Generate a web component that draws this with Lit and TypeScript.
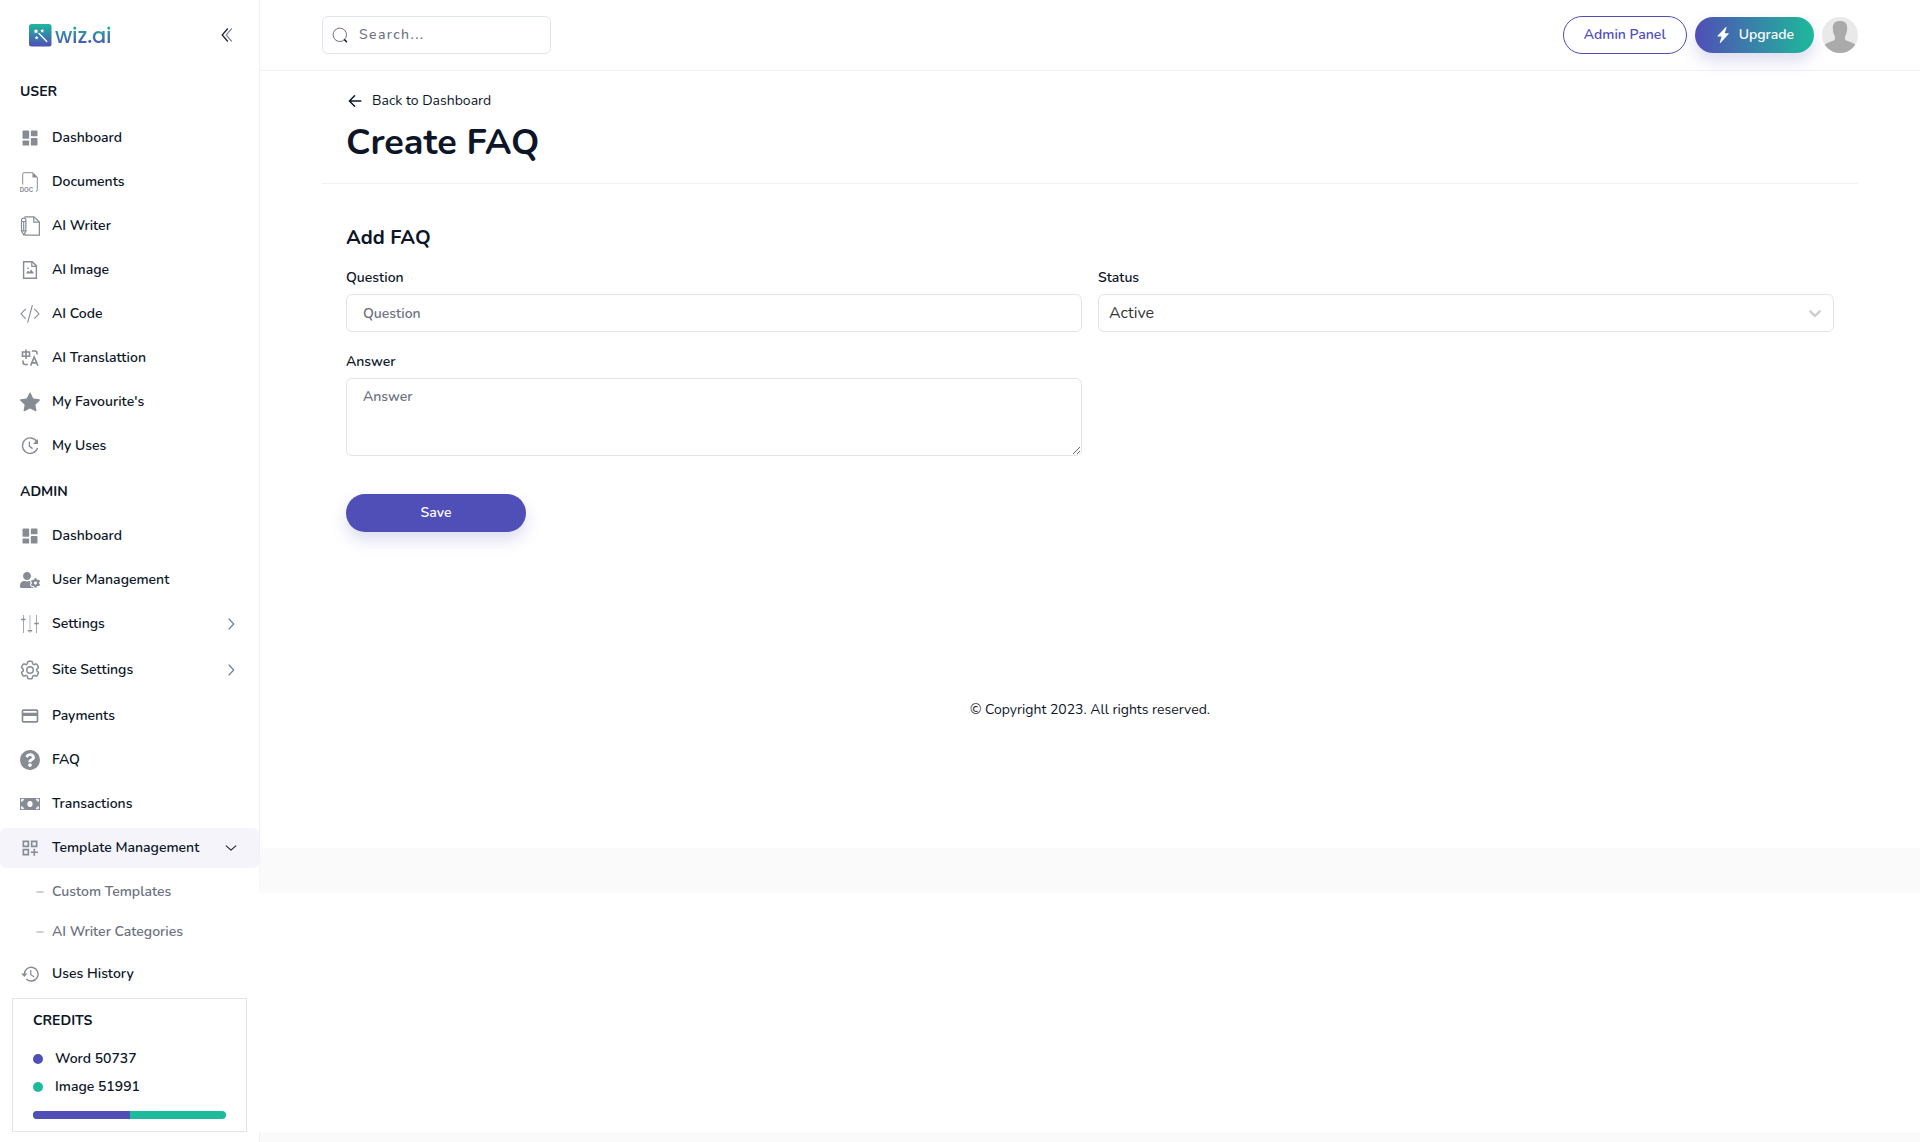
import { LitElement, html, svg, css, nothing, type TemplateResult, type SVGTemplateResult } from "lit";
import { customElement } from "lit/decorators.js";

const icon = (box: string, body: SVGTemplateResult) =>
  html`<svg class="icon" viewBox=${box} aria-hidden="true">${body}</svg>`;

const icons: Record<string, TemplateResult> = {
  dashboard: icon("0 0 24 24", svg`<path fill="currentColor" d="M4 13h6a1 1 0 0 0 1-1V4a1 1 0 0 0-1-1H4a1 1 0 0 0-1 1v8a1 1 0 0 0 1 1zm-1 7a1 1 0 0 0 1 1h6a1 1 0 0 0 1-1v-4a1 1 0 0 0-1-1H4a1 1 0 0 0-1 1v4zm10 0a1 1 0 0 0 1 1h6a1 1 0 0 0 1-1v-7a1 1 0 0 0-1-1h-6a1 1 0 0 0-1 1v7zm1-10h6a1 1 0 0 0 1-1V4a1 1 0 0 0-1-1h-6a1 1 0 0 0-1 1v5a1 1 0 0 0 1 1z"/>`),
  documents: icon("0 0 20 20", svg`
    <path fill="none" stroke="currentColor" d="M2.7 12.5V2.2Q2.7.7 4.2.7H13l4.3 4.5v12.6q0 1.4-1.5 1.7"/>
    <path fill="currentColor" d="M12.5.7v4.800h4.800z"/>
    <text x="-.3" y="19.6" font-size="6.3" font-weight="700" textLength="13.5" lengthAdjust="spacingAndGlyphs" fill="currentColor" font-family="Liberation Sans, sans-serif">DOC</text>`),
  writer: icon("0 0 20 20", svg`
    <g fill="none" stroke="currentColor" stroke-width="1.2">
      <path d="M5 1.800V.8h9l5.400 5.200v13.200H5v-1.400"/>
      <path d="M13.800 1v5.200h5.400"/>
      <path d="M1.500 4q0-1.900 2.200-1.900T5.900 4v11l-2.200 3.800L1.500 15z"/>
      <path d="M1.500 5.500h4.400M3.700 6v8.500M1.500 14.800h4.400"/>
    </g>`),
  image: icon("0 0 20 20", svg`
    <path fill="none" stroke="currentColor" stroke-width="1.4" d="M3.600 1.700h8.600l4.200 4.200v12.400H3.600z"/>
    <path fill="none" stroke="currentColor" stroke-width="1.2" d="M11.800 2v4.300h4.400"/>
    <path fill="currentColor" d="M6 13.500l2-3 1.400 1.600 1.900-2.600 2.700 4zM7.300 7.500h1.500v1.400H7.300z"/>`),
  code: icon("0 0 20 20", svg`<path fill="none" stroke="currentColor" stroke-width="1.1" stroke-linecap="round" stroke-linejoin="round" d="M5.400 5.200L1 9.800l4.400 4.600M14.600 5.200L19 9.800l-4.400 4.600M12.300 1.500L7.700 18.300"/>`),
  translate: icon("0 0 20 20", svg`
    <g fill="none" stroke="currentColor" stroke-width="1.6">
      <path d="M2.500 4h7v4.200h-7zM6 1.600v9.400"/>
      <path d="M11.800 3H15q2 0 2 2v1.500M3 12.500v1.800q0 2.200 2.200 2.200h2.600"/>
      <path d="M10.600 17.600L14.200 9l3.700 8.600M11.800 14.900h4.900"/>
    </g>`),
  star: icon("0 0 16 16", svg`<path fill="currentColor" d="M3.612 15.443c-.386.198-.824-.149-.746-.592l.83-4.730L.173 6.765c-.329-.314-.158-.888.283-.95l4.898-.696L7.538.792c.197-.39.73-.39.927 0l2.184 4.327 4.898.696c.441.062.612.636.282.95l-3.522 3.356.83 4.730c.078.443-.36.79-.746.592L8 13.187l-4.389 2.256z"/>`),
  uses: icon("0 0 20 20", svg`
    <path fill="none" stroke="currentColor" stroke-width="1.3" d="M16.700 5.600A7.700 7.700 0 1 0 17.500 12"/>
    <path fill="none" stroke="currentColor" stroke-width="1.3" d="M9.400 5.500v4.900l3.200 2.200"/>
    <path fill="currentColor" d="M18 3v5h-5z"/>`),
  users: icon("0 0 640 512", svg`<path fill="currentColor" d="M610.5 373.3c2.6-14.1 2.6-28.5 0-42.6l25.8-14.9c3-1.7 4.3-5.2 3.3-8.5-6.7-21.6-18.2-41.2-33.2-57.4-2.3-2.5-6-3.1-9-1.4l-25.8 14.9c-10.9-9.3-23.4-16.5-36.9-21.3v-29.8c0-3.4-2.4-6.4-5.7-7.1-22.3-5-45-4.8-66.2 0-3.3.7-5.7 3.7-5.7 7.1v29.8c-13.5 4.8-26 12-36.9 21.3l-25.8-14.9c-2.9-1.7-6.7-1.1-9 1.4-15 16.2-26.5 35.8-33.2 57.4-1 3.3.4 6.8 3.3 8.5l25.8 14.9c-2.6 14.1-2.6 28.5 0 42.6l-25.8 14.9c-3 1.7-4.3 5.2-3.3 8.5 6.7 21.6 18.2 41.1 33.2 57.4 2.3 2.5 6 3.1 9 1.4l25.8-14.9c10.9 9.3 23.4 16.5 36.9 21.3v29.8c0 3.4 2.4 6.4 5.7 7.1 22.3 5 45 4.8 66.2 0 3.3-.7 5.7-3.7 5.7-7.1v-29.8c13.5-4.8 26-12 36.9-21.3l25.8 14.9c2.9 1.7 6.7 1.1 9-1.4 15-16.2 26.5-35.8 33.2-57.4 1-3.3-.4-6.8-3.3-8.5l-25.8-14.9zM496 400.5c-26.8 0-48.5-21.8-48.5-48.5s21.8-48.5 48.5-48.5 48.5 21.8 48.5 48.5-21.7 48.5-48.5 48.5zM224 256c70.7 0 128-57.3 128-128S294.700 0 224 0 96 57.300 96 128s57.300 128 128 128zm201.200 226.500c-2.300-1.200-4.600-2.600-6.800-3.900l-7.900 4.600c-6 3.400-12.800 5.300-19.600 5.300-10.900 0-21.400-4.600-28.900-12.600-18.300-19.800-32.300-43.900-40.200-69.600-5.500-17.700 1.900-36.400 17.900-45.700l7.900-4.600c-.1-2.600-.1-5.200 0-7.800l-7.900-4.600c-16-9.200-23.400-28-17.900-45.700.9-2.900 2.200-5.800 3.200-8.700-3.800-.3-7.500-1.200-11.400-1.200h-16.700c-22.200 10.200-46.900 16-72.900 16s-50.600-5.800-72.900-16h-16.700C60.200 288 0 348.200 0 422.400V464c0 26.500 21.500 48 48 48h352c10.100 0 19.500-3.200 27.200-8.500-1.200-3.800-2-7.700-2-11.800v-9.200z"/>`),
  sliders: icon("0 0 20 20", svg`
    <path fill="none" stroke="currentColor" stroke-width="1" opacity=".75" d="M3.500 1v18M16.500 1v18"/>
    <path fill="none" stroke="currentColor" stroke-width="2" opacity=".3" d="M10 1v14.500M10 17.500V19"/>
    <path fill="none" stroke="currentColor" stroke-width="1.5" d="M1.200 5.500h4.300M7.800 16.700h4.400M14.300 9.500h4.500"/>`),
  gear: icon("1.8 1.8 20.4 20.4", svg`<g fill="none" stroke="currentColor" stroke-width="1.5"><path d="M9.594 3.940c.09-.542.56-.94 1.110-.94h2.593c.55 0 1.020.398 1.110.94l.213 1.281c.063.374.313.686.645.87.074.04.147.083.22.127.325.196.72.257 1.075.124l1.217-.456a1.125 1.125 0 0 1 1.370.49l1.296 2.247a1.125 1.125 0 0 1-.26 1.431l-1.003.827c-.293.241-.438.613-.43.992a7.723 7.723 0 0 1 0 .255c-.008.378.137.75.43.991l1.004.827c.424.35.534.955.26 1.430l-1.298 2.247a1.125 1.125 0 0 1-1.369.491l-1.217-.456c-.355-.133-.75-.072-1.076.124a6.470 6.470 0 0 1-.22.128c-.331.183-.581.495-.644.869l-.213 1.281c-.09.543-.56.94-1.110.94h-2.594c-.55 0-1.019-.398-1.110-.94l-.213-1.281c-.062-.374-.312-.686-.644-.87a6.520 6.520 0 0 1-.22-.127c-.325-.196-.72-.257-1.076-.124l-1.217.456a1.125 1.125 0 0 1-1.369-.49l-1.297-2.247a1.125 1.125 0 0 1 .26-1.431l1.004-.827c.292-.24.437-.613.43-.991a6.932 6.932 0 0 1 0-.255c.007-.38-.138-.751-.43-.992l-1.004-.827a1.125 1.125 0 0 1-.26-1.430l1.297-2.247a1.125 1.125 0 0 1 1.370-.491l1.216.456c.356.133.751.072 1.076-.124.072-.044.146-.086.22-.128.332-.183.582-.495.644-.869l.214-1.280Z"/><circle cx="12" cy="12" r="3.3"/></g>`),
  card: icon("0 0 24 24", svg`<path fill="currentColor" d="M20 4H4c-1.110 0-1.990.89-1.990 2L2 18c0 1.110.89 2 2 2h16c1.110 0 2-.89 2-2V6c0-1.110-.89-2-2-2zm0 14H4v-6h16v6zm0-10H4V6h16v2z"/>`),
  question: icon("6 6 500 500", svg`<path fill="currentColor" d="M504 256c0 136.997-111.043 248-248 248S8 392.997 8 256C8 119.083 119.043 8 256 8s248 111.083 248 248zM262.655 90c-54.497 0-89.255 22.957-116.549 63.758-3.536 5.286-2.353 12.415 2.715 16.258l34.699 26.310c5.205 3.947 12.621 3.008 16.665-2.122 17.864-22.658 30.113-35.797 57.303-35.797 20.429 0 45.698 13.148 45.698 32.958 0 14.976-12.363 22.667-32.534 33.976C247.128 238.528 216 254.941 216 296v4c0 6.627 5.373 12 12 12h56c6.627 0 12-5.373 12-12v-1.333c0-28.462 83.186-29.647 83.186-106.667 0-58.002-60.165-102-116.531-102zM256 338c-25.365 0-46 20.635-46 46 0 25.364 20.635 46 46 46s46-20.636 46-46c0-25.365-20.635-46-46-46z"/>`),
  money: icon("0 0 20 20", svg`
    <rect x="0" y="4" width="20" height="12" fill="currentColor"/>
    <ellipse cx="10" cy="10" rx="2.6" ry="3" fill="#fff"/>
    <path fill="none" stroke="#fff" stroke-width="1" d="M1.500 7.300Q3.500 7 3.800 5.300H1.500zM18.500 7.300Q16.500 7 16.200 5.300h2.300zM1.500 12.700q2 .3 2.300 2H1.500zM18.500 12.700q-2 .3-2.300 2h2.300z"/>`),
  template: icon("0 0 24 24", svg`<path fill="currentColor" fill-rule="evenodd" d="M3 3h8v8H3zM5 5v4h4V5zM13 3h8v8h-8zM15 5v4h4V5zM3 13h8v8H3zM5 15v4h4v-4zM16.200 13h1.900v3.200H21.500v1.900h-3.400V21.300h-1.900v-3.200H13v-1.900h3.200z"/>`),
  history: icon("0 0 20 20", svg`
    <path fill="none" stroke="currentColor" stroke-width="1.4" d="M4.300 10.200A6.900 6.900 0 1 1 6.300 15"/>
    <path fill="currentColor" d="M1.200 9.600h6.200l-3.100 3.300z"/>
    <path fill="none" stroke="currentColor" stroke-width="1.2" d="M10.800 6v4.700l3.300 2"/>`),
};

type Item = { label: string; icon: string; chevron?: "right" | "down"; children?: string[] };

const USER_ITEMS: Item[] = [
  { label: "Dashboard", icon: "dashboard" },
  { label: "Documents", icon: "documents" },
  { label: "AI Writer", icon: "writer" },
  { label: "AI Image", icon: "image" },
  { label: "AI Code", icon: "code" },
  { label: "AI Translattion", icon: "translate" },
  { label: "My Favourite's", icon: "star" },
  { label: "My Uses", icon: "uses" },
];

const ADMIN_ITEMS: Item[] = [
  { label: "Dashboard", icon: "dashboard" },
  { label: "User Management", icon: "users" },
  { label: "Settings", icon: "sliders", chevron: "right" },
  { label: "Site Settings", icon: "gear", chevron: "right" },
  { label: "Payments", icon: "card" },
  { label: "FAQ", icon: "question" },
  { label: "Transactions", icon: "money" },
  { label: "Template Management", icon: "template", chevron: "down", children: ["Custom Templates", "AI Writer Categories"] },
  { label: "Uses History", icon: "history" },
];

@customElement("side-nav")
export class SideNav extends LitElement {
  static styles = css`
    :host { display: flex; flex-direction: column; width: 259px; height: 1142px; background: #fff; color: #0d1628; font-weight: 600; }
    .brand { display: flex; align-items: center; justify-content: space-between; height: 71px; padding: 0 26px 0 29px; box-sizing: border-box; }
    .logo { display: flex; align-items: center; gap: 3px; }
    .mark { width: 23px; height: 23px; display: block; }
    .name { font: 500 21px/30px Poppins, Nunito, sans-serif; letter-spacing: -0.2px; color: transparent; background: linear-gradient(180deg, #1eb99a 3px, #504eb7 25px); background-clip: text; -webkit-background-clip: text; }
    .fold { width: 12px; height: 16px; display: block; margin-bottom: 1px; }
    .title { height: 40px; line-height: 40px; padding-left: 20px; font-weight: 700; }
    .user { padding-top: 1px; }
    .admin { margin-top: -1px; padding-bottom: 1px; }
    .list { display: flex; flex-direction: column; gap: 4px; }
    .list.first { padding: 6px 0 7px; }
    .list.second { padding-top: 3px; }
    .row { display: flex; align-items: center; height: 40px; padding: 0 20px; gap: 12px; border-radius: 6px; }
    .expandable { margin-bottom: 2px; }
    .open { background: #f5f4fa; margin: 0; }
    .label { flex: 1; }
    .icon { width: 20px; height: 20px; flex: none; color: #878c94; overflow: visible; }
    .chev { width: 12px; height: 12px; margin-right: 2px; color: #6a78a8; }
    .chev.down { color: #1b2438; }
    .children { display: flex; flex-direction: column; margin: 0 0 -2px; padding-left: 36px; }
    .child { display: flex; align-items: center; gap: 8px; height: 40px; color: #6b7280; }
    .child::before { content: ""; width: 8px; height: 2px; border-radius: 1px; background: #cfd2da; }
    .credits { margin: 4px 12px 0; width: 235px; height: 134px; box-sizing: border-box; border: 1px solid #e3e4e8; padding: 12px 20px 0; }
    .heading { font-weight: 700; line-height: 20px; margin-bottom: 14px; }
    .stat { display: flex; align-items: center; gap: 12px; height: 28px; }
    .dot { width: 10px; height: 10px; border-radius: 50%; background: #504eb7; }
    .teal { background: #1dbb9b; }
    .bar { display: flex; width: 193px; height: 8px; margin-top: 10px; border-radius: 4px; overflow: hidden; background: #1dbb9b; }
    .fill { background: #504eb7; }
  `;

  private row(item: Item) {
    const cls = `row ${item.chevron === "right" ? "expandable" : ""} ${item.children ? "open" : ""}`;
    return html`
      <div class=${cls}>
        ${icons[item.icon]}<span class="label">${item.label}</span>
        ${item.chevron
          ? html`<svg class="chev ${item.chevron}" viewBox="0 0 12 12" fill="none" stroke="currentColor" stroke-width="1.1" stroke-linecap="round" stroke-linejoin="round">
              <path d=${item.chevron === "right" ? "M4 1l4.700 5L4 11" : "M1.200 3.800L6 8.200l4.800-4.400"} />
            </svg>`
          : nothing}
      </div>
      ${item.children ? html`<div class="children">${item.children.map((c) => html`<div class="child">${c}</div>`)}</div>` : nothing}
    `;
  }

  render() {
    const word = 50737;
    const image = 51991;
    return html`
      <div class="brand">
        <div class="logo">
          <svg class="mark" viewBox="0 0 23 23">
            <defs><linearGradient id="g" x1="0" y1="0" x2="0" y2="1"><stop offset="0" stop-color="#1cb99c" /><stop offset="1" stop-color="#504eb7" /></linearGradient></defs>
            <rect x="0" y="0" width="22.5" height="22.5" rx="2.5" fill="url(#g)" />
            <path d="M10 9.500l7.800 8" stroke="#fff" stroke-width="1.3" stroke-linecap="round" />
            <path fill="#fff" d="M7 4.800l.7 1.500 1.700.2-1.200 1.200.3 1.700L7 8.600l-1.500.8.3-1.700-1.200-1.200 1.700-.2zM13.200 4.800l.6 1.200 1.300.2-.9 1 .2 1.300-1.200-.6-1.200.6.2-1.300-.9-1 1.300-.2zM7.600 12l.6 1.100 1.200.2-.9.9.2 1.200-1.100-.6-1.100.6.2-1.200-.9-.9 1.200-.2z" />
          </svg>
          <span class="name">wiz.ai</span>
        </div>
        <svg class="fold" viewBox="0 0 12 16" fill="none" stroke-width="1.3">
          <path stroke="#1b2438" d="M6.800 1.500L1.200 8l5.600 6.500" /><path stroke="#8a8f9b" d="M10.800 1.500L5.200 8l5.600 6.500" />
        </svg>
      </div>
      <div class="title user">USER</div>
      <div class="list first">${USER_ITEMS.map((i) => this.row(i))}</div>
      <div class="title admin">ADMIN</div>
      <div class="list second">${ADMIN_ITEMS.map((i) => this.row(i))}</div>
      <div class="credits">
        <div class="heading">CREDITS</div>
        <div class="stat"><span class="dot"></span>Word ${word}</div>
        <div class="stat"><span class="dot teal"></span>Image ${image}</div>
        <div class="bar"><div class="fill" style="width:${((Math.max(word, image) / (word + image)) * 100 - 0.3).toFixed(2)}%"></div></div>
      </div>
    `;
  }
}

@customElement("top-bar")
export class TopBar extends LitElement {
  static styles = css`
    :host { display: flex; align-items: center; justify-content: space-between; height: 71px; box-sizing: border-box; padding: 0 62px; border-bottom: 1px solid #f1f2f4; }
    .search { display: flex; align-items: center; gap: 11px; width: 229px; height: 38px; box-sizing: border-box; padding: 0 9px; border: 1px solid #dfe4ee; border-radius: 6px; }
    .glass { width: 16px; height: 16px; flex: none; margin-bottom: 1px; }
    input { flex: 1; min-width: 0; border: 0; outline: 0; padding: 0; background: none; font: inherit; font-weight: 500; letter-spacing: 1.4px; color: #0d1628; }
    input::placeholder { color: #6b7280; opacity: 1; }
    .actions { display: flex; align-items: center; gap: 8px; font-weight: 600; }
    .admin { height: 38px; box-sizing: border-box; padding: 0 20px; line-height: 36px; border: 1px solid #504eb7; border-radius: 19px; color: #504eb7; }
    .upgrade { display: flex; align-items: center; gap: 8px; height: 36px; padding: 0 20px; border-radius: 18px; color: #fff; background: linear-gradient(90deg, #504eb7, #1eb99a); box-shadow: 0 8px 16px rgba(80, 78, 183, 0.2); }
    .bolt { width: 16px; height: 16px; }
    .avatar { width: 36px; height: 36px; }
  `;
  render() {
    return html`
      <label class="search">
        <svg class="glass" viewBox="0 0 16 16" fill="none"><circle cx="7.8" cy="7.8" r="6.7" stroke="#5b606b" stroke-width=".9" /><path d="M12.500 12.700l2 2" stroke="#0d1628" stroke-width="1.5" stroke-linecap="round" /></svg>
        <input placeholder="Search..." />
      </label>
      <div class="actions">
        <div class="admin">Admin Panel</div>
        <div class="upgrade">
          <svg class="bolt" viewBox="0 0 16 16"><path fill="#fff" d="M11.250.1a.5.5 0 0 1 .23.600L9.700 6.200h3.600a.5.5 0 0 1 .36.840l-8 8.800a.5.5 0 0 1-.85-.48L6.600 9.600H3a.5.5 0 0 1-.4-.82L10.650.2a.5.5 0 0 1 .6-.1z" /></svg>
          Upgrade
        </div>
        <svg class="avatar" viewBox="0 0 36 36">
          <defs><clipPath id="c"><circle cx="18" cy="18" r="18" /></clipPath></defs>
          <g clip-path="url(#c)">
            <rect width="36" height="36" fill="#e9e9e9" />
            <path fill="#aaa" d="M18 4c5 0 7.400 2.600 7.200 7.200-.1 2.200-.5 4.800-1.500 6.800-.7 1.400-.9 2.400-.6 3.900.2 1 1.200 1.500 2.600 2.100 3.600 1.500 6.800 2.200 8.300 4.500V36H2v-7.500c1.500-2.300 4.700-3 8.300-4.500 1.400-.6 2.400-1.100 2.600-2.100.3-1.500.1-2.500-.6-3.900-1-2-1.400-4.600-1.500-6.800C10.600 6.600 13 4 18 4z" />
          </g>
        </svg>
      </div>
    `;
  }
}

@customElement("app-root")
export class AppRoot extends LitElement {
  static styles = css`
    :host { display: flex; width: 1920px; height: 1142px; overflow: hidden; background: #fff; color: #0d1628; font: 400 14px/20px Nunito, Lato, "Open Sans", sans-serif; }
    side-nav { flex: none; }
    .column { flex: 1; display: flex; flex-direction: column; }
    .page { display: flex; flex-direction: column; height: 893px; box-sizing: border-box; border-left: 1px solid #f0f0f2; border-bottom: 45px solid #fafafa; }
    .blank { flex: 1; }
    .strip { height: 10px; background: #fafafa; border-left: 1px solid #f0f0f2; }
    .head { margin: 0 62px; padding: 19px 24px 0; height: 113px; box-sizing: border-box; border-bottom: 1px solid #f0f1f4; }
    .back { display: flex; align-items: center; gap: 9px; height: 22px; }
    .arrow { width: 16px; height: 16px; margin-left: 1px; }
    h1 { margin: 6px 0 0; font-size: 36px; line-height: 50px; font-weight: 700; }
    .form { padding: 40px 86px 0; }
    h2 { margin: 0 0 16px; font-size: 20px; line-height: 28px; font-weight: 700; }
    .grid { display: grid; grid-template-columns: 1fr 1fr; gap: 20px 16px; }
    .field { display: flex; flex-direction: column; gap: 6px; }
    .label { font-weight: 600; }
    .control { box-sizing: border-box; width: 100%; height: 38px; margin: 0; padding: 0 16px; border: 1px solid #dfe4ee; border-radius: 6px; outline: 0; background: #fff; font: inherit; font-weight: 600; color: #0d1628; }
    .control::placeholder { color: #6b7280; opacity: 1; }
    .area { height: 78px; padding: 8px 16px; display: block; resize: vertical; }
    .select { display: flex; align-items: center; justify-content: space-between; padding: 0 8px 0 10px; font-size: 16px; font-weight: 400; color: #333; }
    .caret { width: 20px; height: 20px; fill: #ccc; }
    .save { width: 180px; height: 38px; margin-top: 38px; border: 0; border-radius: 19px; background: #504eb7; color: #fff; font: inherit; font-weight: 600; box-shadow: 0 8px 16px rgba(80, 78, 183, 0.2); }
    .copy { margin-top: 168px; text-align: center; }
  `;
  render() {
    return html`
      <side-nav></side-nav>
      <div class="column">
        <main class="page">
          <top-bar></top-bar>
          <div class="head">
            <div class="back">
              <svg class="arrow" viewBox="0 0 16 16" fill="none" stroke="#0d1628" stroke-width="1.5" stroke-linecap="round" stroke-linejoin="round"><path d="M13.800 8H2.700M7.600 2.700L2.400 8l5.200 5.300" /></svg>
              Back to Dashboard
            </div>
            <h1>Create FAQ</h1>
          </div>
          <div class="form">
            <h2>Add FAQ</h2>
            <div class="grid">
              <div class="field"><span class="label">Question</span><input class="control" placeholder="Question" /></div>
              <div class="field">
                <span class="label">Status</span>
                <div class="control select">
                  Active
                  <svg class="caret" viewBox="0 0 20 20"><path d="M4.516 7.548c0.436-0.446 1.043-0.481 1.576 0l3.908 3.747 3.908-3.747c0.533-0.481 1.141-0.446 1.574 0 0.436 0.445 0.408 1.197 0 1.615-0.406 0.418-4.695 4.502-4.695 4.502-0.217 0.223-0.502 0.335-0.787 0.335s-0.570-0.112-0.789-0.335c0 0-4.287-4.084-4.695-4.502s-0.436-1.170 0-1.615z" /></svg>
                </div>
              </div>
              <div class="field"><span class="label">Answer</span><textarea class="control area" placeholder="Answer"></textarea></div>
            </div>
            <button class="save">Save</button>
          </div>
          <div class="copy">© Copyright 2023. All rights reserved.</div>
        </main>
        <div class="blank"></div>
        <div class="strip"></div>
      </div>
    `;
  }
}
